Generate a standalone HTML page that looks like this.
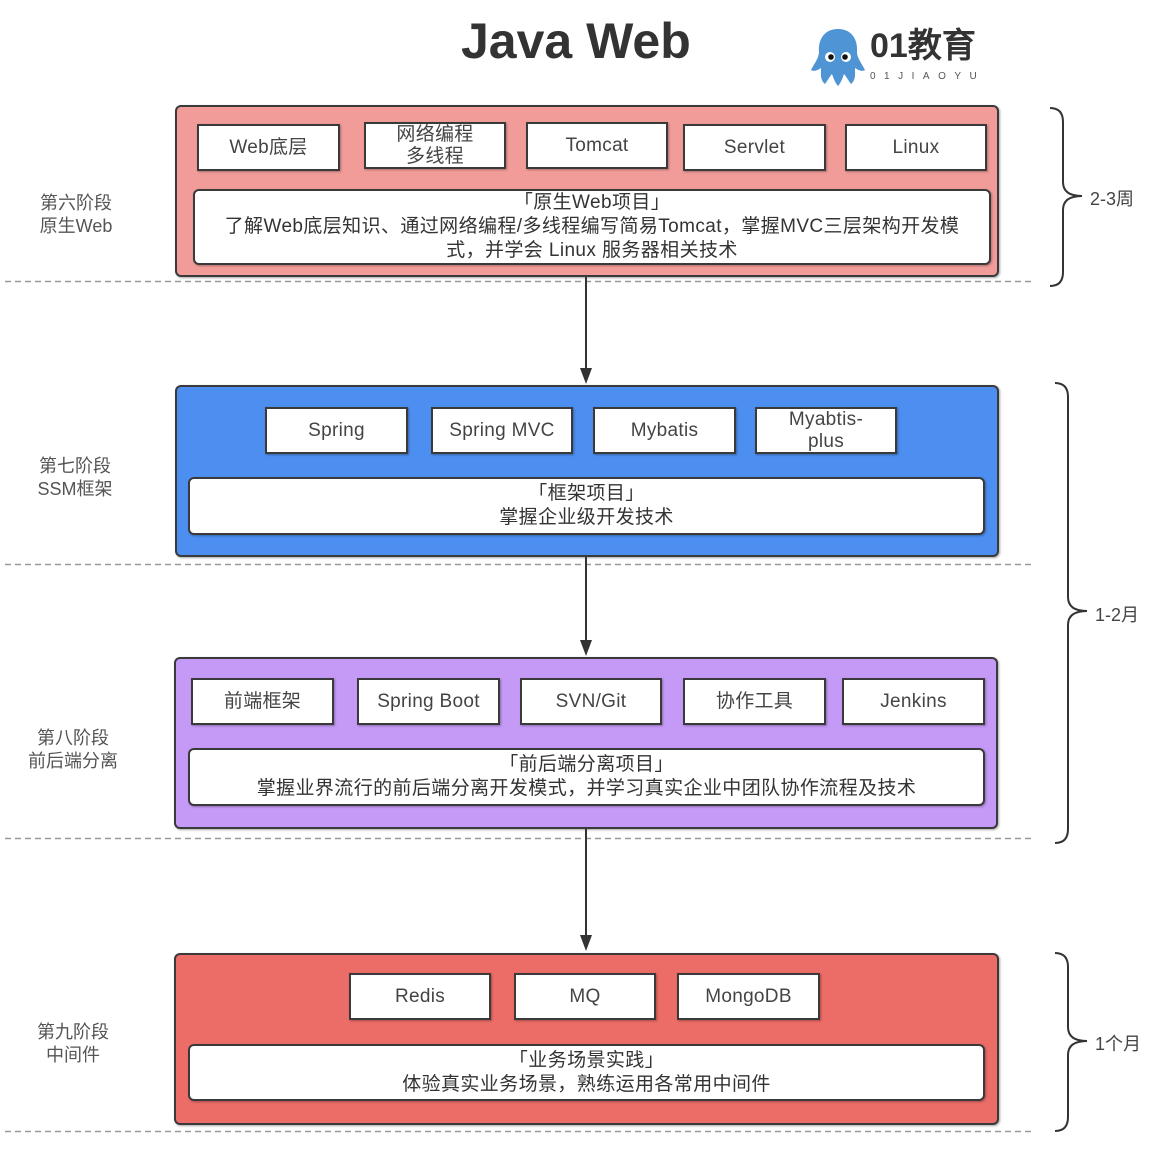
<!DOCTYPE html>
<html><head><meta charset="utf-8"><style>
*{margin:0;padding:0;box-sizing:border-box}
body{width:1159px;height:1153px;background:#fff;position:relative;overflow:hidden;font-family:"Liberation Sans","Noto Sans CJK SC",sans-serif;color:#333}
.a{position:absolute}
.sec{position:absolute;border:2px solid #3a3a3a;border-radius:6px;box-shadow:1px 1px 2px rgba(0,0,0,.35)}
.b{position:absolute;background:#fff;border:2.5px solid #3a3a3a;display:flex;align-items:center;justify-content:center;text-align:center;font-size:19px;line-height:22px;color:#444;box-shadow:1px 1px 2px rgba(0,0,0,.3);letter-spacing:0.3px}
.d{position:absolute;background:#fff;border:2.5px solid #3a3a3a;border-radius:6px;display:flex;align-items:center;justify-content:center;text-align:center;font-size:19px;line-height:24px;color:#333;box-shadow:1px 1px 2px rgba(0,0,0,.3);letter-spacing:0.4px;white-space:nowrap}
.lbl{position:absolute;font-size:18px;line-height:23px;color:#555;text-align:center;width:120px}
.rl{position:absolute;font-size:18px;color:#444}
</style></head><body>
<div class="a" style="left:461px;top:11px;font-size:50px;font-weight:bold;color:#333;line-height:60px">Java Web</div>
<svg class="a" style="left:808px;top:26px" width="60" height="62" viewBox="0 0 60 62">
<path d="M30 3 C16 3 10 14 11 26 C11 32 6 38 3 44 C6 46 10 44 13 42 C13 48 12 54 17 58 C20 54 22 50 24 48 C26 54 28 58 30 60 C32 58 34 54 36 48 C38 50 40 54 43 58 C48 54 47 48 47 42 C50 44 54 46 57 44 C54 38 49 32 49 26 C50 14 44 3 30 3Z" fill="#4f94d4"/>
<circle cx="22" cy="31" r="5" fill="#fff"/><circle cx="38" cy="31" r="5" fill="#fff"/>
<circle cx="23" cy="31" r="2.8" fill="#111"/><circle cx="37" cy="31" r="2.8" fill="#111"/>
</svg>
<div class="a" style="left:870px;top:26px;font-size:34px;font-weight:bold;color:#333;line-height:40px;font-family:'Liberation Sans','WenQuanYi Zen Hei',sans-serif">01教育</div>
<div class="a" style="left:870px;top:71px;font-size:10px;letter-spacing:8.5px;color:#555">01JIAOYU</div>

<div class="sec" style="left:175px;top:105px;width:824px;height:172px;background:#f19c99"></div>
<div class="b" style="left:197px;top:124px;width:143px;height:47px">Web底层</div>
<div class="b" style="left:364px;top:122px;width:142px;height:47px">网络编程<br>多线程</div>
<div class="b" style="left:526px;top:122px;width:142px;height:47px">Tomcat</div>
<div class="b" style="left:683px;top:124px;width:143px;height:47px">Servlet</div>
<div class="b" style="left:845px;top:124px;width:142px;height:47px">Linux</div>
<div class="d" style="left:193px;top:189px;width:798px;height:76px">「原生Web项目」<br>了解Web底层知识、通过网络编程/多线程编写简易Tomcat，掌握MVC三层架构开发模<br>式，并学会 Linux 服务器相关技术</div>

<div class="sec" style="left:175px;top:385px;width:824px;height:172px;background:#4d8ff0"></div>
<div class="b" style="left:265px;top:407px;width:143px;height:47px">Spring</div>
<div class="b" style="left:431px;top:407px;width:142px;height:47px">Spring MVC</div>
<div class="b" style="left:593px;top:407px;width:143px;height:47px">Mybatis</div>
<div class="b" style="left:755px;top:407px;width:142px;height:47px">Myabtis-<br>plus</div>
<div class="d" style="left:188px;top:477px;width:797px;height:58px">「框架项目」<br>掌握企业级开发技术</div>

<div class="sec" style="left:174px;top:657px;width:824px;height:172px;background:#c59af7"></div>
<div class="b" style="left:191px;top:678px;width:143px;height:47px">前端框架</div>
<div class="b" style="left:357px;top:678px;width:143px;height:47px">Spring Boot</div>
<div class="b" style="left:520px;top:678px;width:142px;height:47px">SVN/Git</div>
<div class="b" style="left:683px;top:678px;width:143px;height:47px">协作工具</div>
<div class="b" style="left:842px;top:678px;width:143px;height:47px">Jenkins</div>
<div class="d" style="left:188px;top:748px;width:797px;height:58px">「前后端分离项目」<br>掌握业界流行的前后端分离开发模式，并学习真实企业中团队协作流程及技术</div>

<div class="sec" style="left:174px;top:953px;width:825px;height:172px;background:#ec6c67"></div>
<div class="b" style="left:349px;top:973px;width:142px;height:47px">Redis</div>
<div class="b" style="left:514px;top:973px;width:142px;height:47px">MQ</div>
<div class="b" style="left:677px;top:973px;width:143px;height:47px">MongoDB</div>
<div class="d" style="left:188px;top:1044px;width:797px;height:57px">「业务场景实践」<br>体验真实业务场景，熟练运用各常用中间件</div>

<div class="lbl" style="left:16px;top:192px">第六阶段<br>原生Web</div>
<div class="lbl" style="left:15px;top:455px">第七阶段<br>SSM框架</div>
<div class="lbl" style="left:13px;top:727px">第八阶段<br>前后端分离</div>
<div class="lbl" style="left:13px;top:1021px">第九阶段<br>中间件</div>

<svg class="a" style="left:0;top:0" width="1159" height="1153">
<g stroke="#999" stroke-width="1.5" stroke-dasharray="6 4">
<line x1="5" y1="281.5" x2="1035" y2="281.5"/>
<line x1="5" y1="564.5" x2="1035" y2="564.5"/>
<line x1="5" y1="838.5" x2="1035" y2="838.5"/>
<line x1="5" y1="1131.5" x2="1035" y2="1131.5"/>
</g>
<g stroke="#333" stroke-width="2" fill="none">
<line x1="586" y1="277" x2="586" y2="372"/>
<line x1="586" y1="557" x2="586" y2="644"/>
<line x1="586" y1="829" x2="586" y2="939"/>
<path d="M1050 108 Q1063 108 1063 122 L1063 182 Q1063 196 1082 196 Q1063 196 1063 210 L1063 272 Q1063 286 1050 286"/>
<path d="M1055 383 Q1068 383 1068 397 L1068 597 Q1068 611 1087 611 Q1068 611 1068 625 L1068 829 Q1068 843 1055 843"/>
<path d="M1055 953 Q1068 953 1068 967 L1068 1027 Q1068 1041 1087 1041 Q1068 1041 1068 1055 L1068 1117 Q1068 1131 1055 1131"/>
</g>
<g fill="#333">
<path d="M580 368 L586 384 L592 368 Z"/>
<path d="M580 640 L586 656 L592 640 Z"/>
<path d="M580 935 L586 951 L592 935 Z"/>
</g>
</svg>
<div class="rl" style="left:1090px;top:185px">2-3周</div>
<div class="rl" style="left:1095px;top:601px">1-2月</div>
<div class="rl" style="left:1095px;top:1030px">1个月</div>
</body></html>
